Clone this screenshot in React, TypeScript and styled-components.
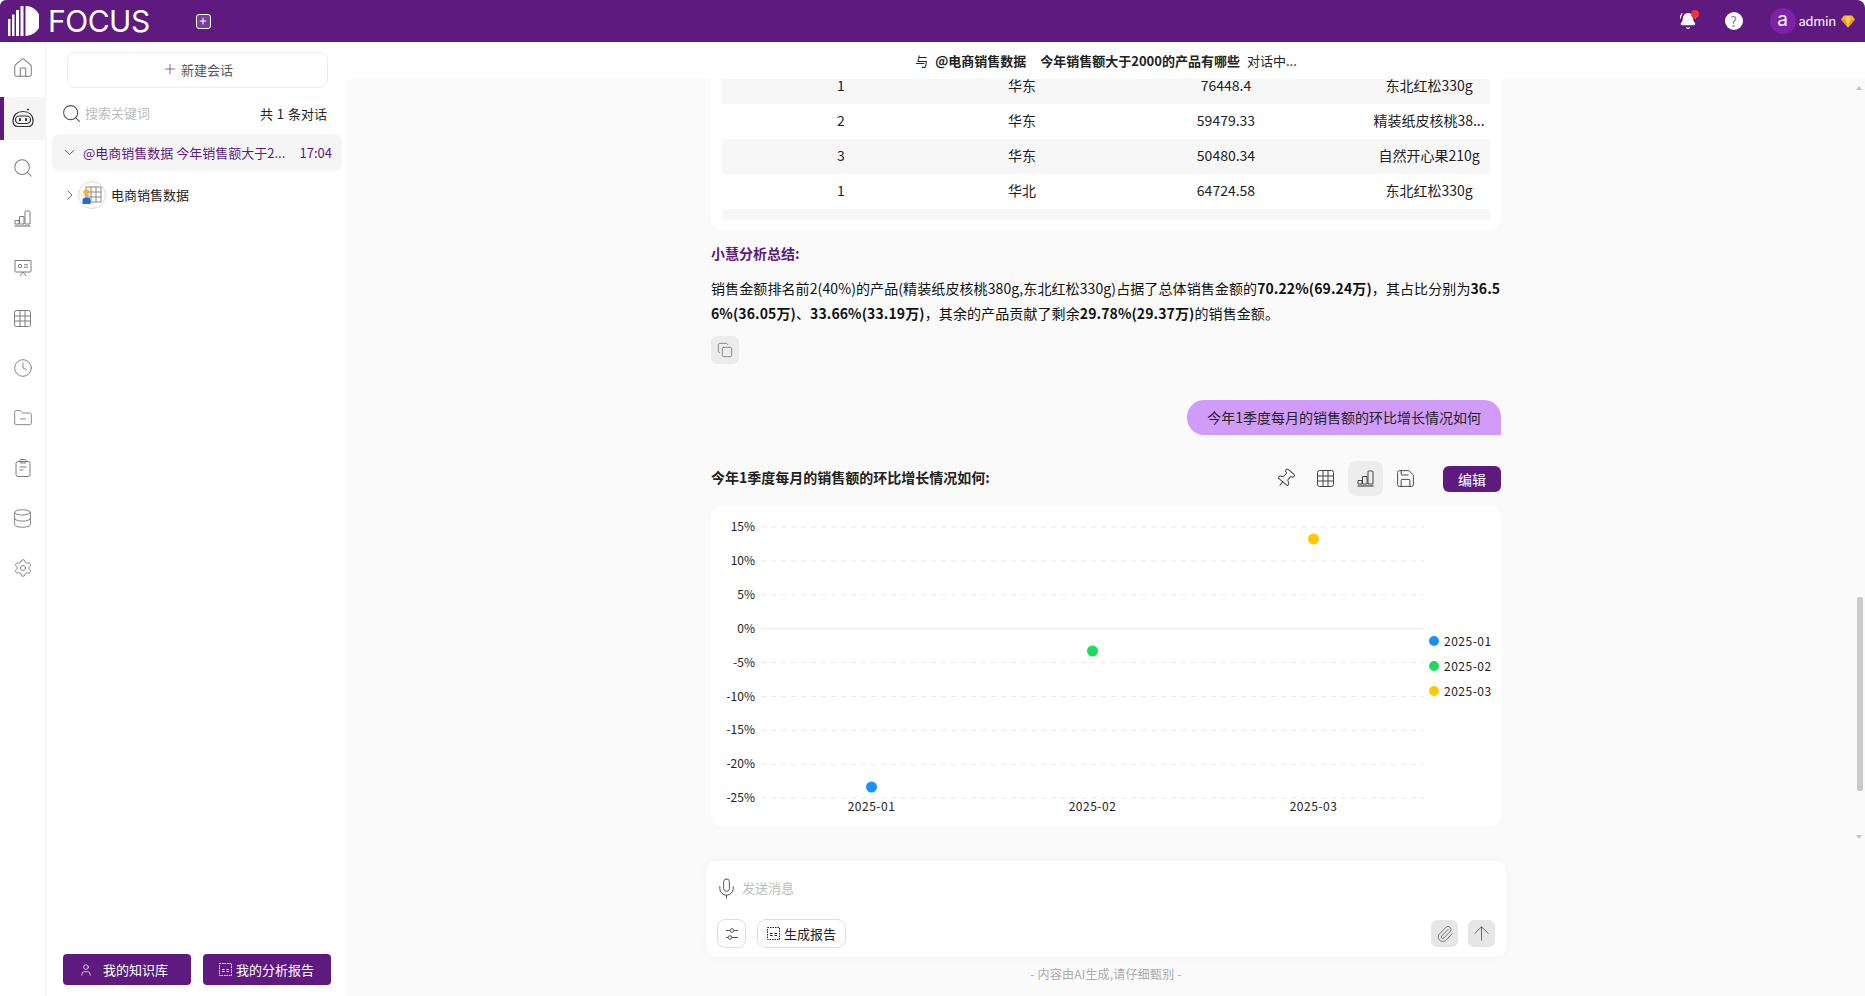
import React from "react";
import styled, { createGlobalStyle } from "styled-components";
import { ArrowUp, BellRing, ChevronDown, ChevronRight, Clock, Copy, Database, FolderMinus, Home, Mic, Paperclip, Pin, Plus, Save, Search, Settings, User } from "lucide-react";

const purple = "#5e1a7e";

const GlobalStyle = createGlobalStyle`
  html, body {
    margin: 0;
    height: 100%;
    background: #fff;
    font-family: "Noto Sans CJK SC", "Noto Sans", sans-serif;
    font-size: 14px;
    color: #222;
  }
  * { box-sizing: border-box; }
`;

const Shell = styled.div`
  display: flex;
  flex-direction: column;
  height: 996px;
  overflow: hidden;
`;

const TopBar = styled.header`
  flex: 0 0 42px;
  display: flex;
  align-items: center;
  padding: 0 10px 0 8px;
  background: ${purple};
  border-radius: 6px 8px 0 0;
  color: #fff;
`;

const LogoText = styled.span`
  margin-left: 9px;
  font-family: Inter, "Liberation Sans", sans-serif;
  font-size: 30px;
  line-height: 42px;
  letter-spacing: -0.5px;
`;

const AddTab = styled.button`
  width: 15px;
  height: 15px;
  margin-left: 46px;
  padding: 0;
  display: flex;
  align-items: center;
  justify-content: center;
  background: #7b3f98;
  color: #fff;
  border: 1px solid #fff;
  border-radius: 3px;
`;

const TopRight = styled.div`
  margin-left: auto;
  display: flex;
  align-items: center;
`;

const BellWrap = styled.span`
  position: relative;
  display: flex;
  margin-right: 28px;
`;

const RedDot = styled.i`
  position: absolute;
  top: -2px;
  right: -2px;
  width: 8px;
  height: 8px;
  border-radius: 50%;
  background: #f5322d;
`;

const HelpBadge = styled.span`
  width: 18px;
  height: 18px;
  margin-right: 27px;
  border-radius: 50%;
  background: #fff;
  color: #8a79a8;
  font-size: 14px;
  line-height: 18px;
  text-align: center;
`;

const Avatar = styled.span`
  width: 26px;
  height: 26px;
  border-radius: 50%;
  background: #7b22a8;
  font-family: Inter, sans-serif;
  font-size: 19px;
  line-height: 23px;
  text-align: center;
`;

const UserName = styled.span`
  margin: 0 5px 0 3px;
  font-size: 13px;
  line-height: 18px;
  letter-spacing: -0.3px;
`;

const Body = styled.div`
  flex: 1;
  min-height: 0;
  display: flex;
`;

const Rail = styled.nav`
  flex: 0 0 46px;
  display: flex;
  flex-direction: column;
  gap: 7px;
  padding-top: 4.5px;
  border-right: 1px solid #f4f4f4;
`;

const RailItem = styled.a<{ $active?: boolean }>`
  flex: 0 0 43px;
  display: flex;
  align-items: center;
  justify-content: center;
  color: #7d7d7d;
  background: ${(p) => (p.$active ? "#f5f5f5" : "transparent")};
  border-left: ${(p) => (p.$active ? `4px solid ${purple}` : "none")};
  padding-right: ${(p) => (p.$active ? "3px" : "0")};
`;

const Sidebar = styled.aside`
  flex: 0 0 301px;
  display: flex;
  flex-direction: column;
  background: #fff;
  font-size: 13px;
`;

const NewChat = styled.button`
  height: 36px;
  margin: 10px 19px 0 21px;
  padding: 0 0 2px;
  display: flex;
  align-items: center;
  justify-content: center;
  gap: 3px;
  background: #fff;
  border: 1px solid #eee;
  border-radius: 8px;
  font: inherit;
  color: #555;
`;

const SearchRow = styled.div`
  height: 26px;
  margin: 12px 20px 0 15px;
  display: flex;
  align-items: center;
  gap: 3px;
  color: #555;
`;

const SearchField = styled.input`
  flex: 1;
  min-width: 0;
  border: 0;
  outline: 0;
  padding: 0 0 2px;
  font: inherit;
  &::placeholder { color: #bdbdbd; }
`;

const Count = styled.span`
  color: #222;
  word-spacing: 1px;
`;

const ConvItem = styled.div`
  height: 37px;
  margin: 8px 5px 0 6px;
  padding: 0 10px 0 9px;
  display: flex;
  align-items: center;
  background: #f5f5f5;
  border-radius: 8px;
  color: ${purple};
`;

const ConvTitle = styled.span`
  margin-left: 5px;
  white-space: nowrap;
`;

const ConvTime = styled.span`
  margin-left: auto;
`;

const TreeRow = styled.div`
  height: 30px;
  margin: 9px 0 0 16px;
  display: flex;
  align-items: center;
  color: #222;
`;

const TreeLabel = styled.span`
  margin-left: 5px;
  padding-bottom: 2px;
`;

const SideFooter = styled.div`
  margin-top: auto;
  padding: 0 16px 11px 17px;
  display: flex;
  gap: 12px;
`;

const SideButton = styled.button<{ $gap: number }>`
  flex: 0 0 128px;
  height: 31px;
  padding: 0 0 0 16px;
  display: flex;
  align-items: center;
  gap: ${(p) => p.$gap}px;
  background: ${purple};
  color: #fff;
  border: 0;
  border-radius: 4px;
  font: inherit;
`;

const Main = styled.main`
  flex: 1;
  min-width: 0;
  position: relative;
  display: flex;
  flex-direction: column;
  background: #fafafa;
`;

const ConvHeader = styled.div`
  flex: 0 0 37px;
  position: relative;
  z-index: 1;
  background: #fff;
  font-size: 13px;
  line-height: 37px;
  text-align: center;
`;

const HeaderTopic = styled.b`
  margin: 0 7px;
  font-weight: 700;
`;

const Strong = styled.b`
  font-weight: 700;
`;

const Feed = styled.div`
  flex: 1;
  min-height: 0;
  overflow: hidden;
`;

const FeedInner = styled.div`
  width: 790px;
  margin: -10px auto 0;
`;

const TableCard = styled.div`
  padding: 0 11px 11px;
  background: #fff;
  border-radius: 0 0 12px 12px;
`;

const Row = styled.div`
  display: grid;
  grid-template-columns: 238px 124px 284px 122px;
  height: 35px;
  padding-bottom: 4px;
  align-items: center;
  text-align: center;
  line-height: 14px;
  &:nth-child(odd) { background: #f7f7f7; }
`;

const Cell = styled.span`
  white-space: nowrap;
`;

const TableTail = styled.div`
  height: 11px;
  background: #f7f7f7;
`;

const SummaryTitle = styled.div`
  margin-top: 12px;
  font-weight: 700;
  font-size: 14px;
  line-height: 20px;
  color: ${purple};
`;

const Summary = styled.p`
  margin: 12.5px 0 0;
  font-size: 14px;
  line-height: 25px;
  letter-spacing: 0.1px;
  word-break: break-all;
  color: #111;
`;

const CopyButton = styled.button`
  display: flex;
  align-items: center;
  justify-content: center;
  width: 28px;
  height: 28px;
  margin-top: 10.5px;
  padding: 0;
  background: #ececec;
  border: 0;
  border-radius: 6px;
  color: #666;
`;

const Bubble = styled.div`
  width: fit-content;
  margin: 36px 0 0 auto;
  padding: 0 20px;
  height: 35px;
  line-height: 35px;
  background: #d19cf9;
  border-radius: 17px 17px 0 17px;
  font-size: 14px;
  white-space: nowrap;
`;

const AnswerHead = styled.div`
  height: 35px;
  margin-top: 26px;
  display: flex;
  align-items: center;
`;

const AnswerTitle = styled.h3`
  margin: 0 auto 4px 0;
  font-size: 14px;
  font-weight: 700;
  line-height: 20px;
`;

const ToolButton = styled.button<{ $active?: boolean }>`
  width: 35px;
  height: 35px;
  margin-left: 5px;
  padding: 0;
  display: flex;
  align-items: center;
  justify-content: center;
  border: 0;
  border-radius: 8px;
  background: ${(p) => (p.$active ? "#ededed" : "transparent")};
  color: #444;
`;

const EditButton = styled.button`
  width: 58px;
  height: 26px;
  margin-left: 20px;
  padding: 0;
  background: ${purple};
  color: #fff;
  border: 0;
  border-radius: 6px;
  font: inherit;
  font-size: 14px;
`;

const ChartCard = styled.div`
  height: 320px;
  margin-top: 10px;
  background: #fff;
  border-radius: 10px;
`;

const ChartSvg = styled.svg`
  display: block;
  font-family: "Noto Sans CJK SC", sans-serif;
  font-size: 12px;
  fill: #222;
`;

const DateLabel = styled.text`
  letter-spacing: 0.5px;
`;

const Composer = styled.div`
  flex: 0 0 96px;
  width: 800px;
  margin: 0 auto;
  padding: 17px 11px 9px;
  display: flex;
  flex-direction: column;
  justify-content: space-between;
  background: #fff;
  border-radius: 10px;
  box-shadow: 0 0 8px rgba(0, 0, 0, 0.04);
`;

const ComposerInput = styled.div`
  height: 20px;
  margin-left: -2px;
  display: flex;
  align-items: center;
  gap: 4px;
  color: #555;
`;

const MessageField = styled.input`
  flex: 1;
  border: 0;
  outline: 0;
  padding: 0 0 2px;
  font: inherit;
  font-size: 13px;
  &::placeholder { color: #bcbcbc; }
`;

const ComposerBar = styled.div`
  height: 29px;
  display: flex;
  align-items: center;
  gap: 11px;
`;

const OutlineButton = styled.button`
  height: 29px;
  min-width: 29px;
  padding: 0 9px;
  display: flex;
  align-items: center;
  justify-content: center;
  gap: 4px;
  background: #fff;
  border: 1px solid #ddd;
  border-radius: 9px;
  font: inherit;
  font-size: 13px;
  color: #222;
`;

const SliderButton = styled(OutlineButton)`
  padding: 0;
  border-radius: 8px;
`;

const GreyButton = styled.button<{ $push?: boolean }>`
  width: 27px;
  height: 27px;
  margin-left: ${(p) => (p.$push ? "auto" : "-1px")};
  padding: 0;
  display: flex;
  align-items: center;
  justify-content: center;
  background: #e6e6e6;
  border: 0;
  border-radius: 6px;
  color: #666;
`;

const Disclaimer = styled.div`
  flex: 0 0 39px;
  padding-top: 7px;
  font-size: 12px;
  line-height: 20px;
  text-align: center;
  letter-spacing: 0.2px;
  color: #aaa;
`;

const ScrollArrow = styled.i<{ $down?: boolean }>`
  position: absolute;
  right: 3px;
  top: ${(p) => (p.$down ? "793px" : "44px")};
  width: 0;
  height: 0;
  border-left: 3.5px solid transparent;
  border-right: 3.5px solid transparent;
  border-bottom: ${(p) => (p.$down ? "0" : "4px solid #c4c4c4")};
  border-top: ${(p) => (p.$down ? "4px solid #c4c4c4" : "0")};
`;

const ScrollThumb = styled.i`
  position: absolute;
  right: 2px;
  top: 555px;
  width: 6px;
  height: 194px;
  border-radius: 2px;
  background: #cacaca;
`;

function LogoMark() {
  return (
    <svg width="31" height="32" viewBox="0 0 31 32" fill="#fff">
      <rect x="0" y="14" width="2.5" height="17" />
      <rect x="4" y="9.5" width="2.5" height="21.5" />
      <rect x="8" y="5" width="3" height="26" />
      <rect x="12.5" y="1" width="3" height="30" />
      <path d="M17.5 1 A 15 15 0 0 1 17.5 31 Z" />
    </svg>
  );
}

function BotIcon() {
  return (
    <svg width="24" height="20" viewBox="0 0 24 20" fill="none" stroke="#333" strokeWidth="1.2">
      <circle cx="17" cy="1.6" r="1" fill="#333" stroke="none" />
      <path d="M2 13 C2 7 6 3.5 12 3.5 S22 7 22 13 C22 17 20 18.5 17 18.5 H7 C4 18.5 2 17 2 13 Z" />
      <rect x="4.5" y="8" width="15" height="7.5" rx="3.7" />
      <rect x="8" y="10" width="2" height="3.2" rx="1" fill="#333" stroke="none" />
      <rect x="14" y="10" width="2" height="3.2" rx="1" fill="#333" stroke="none" />
    </svg>
  );
}

function BarsIcon({ size = 17 }: { size?: number }) {
  return (
    <svg width={size} height={size} viewBox="0 0 17 17" fill="none" stroke="currentColor" strokeWidth="1">
      <path d="M1 10.5 H5 V14 H1 Z M5.5 6.5 H10 V14 H5.5 Z M11 1.5 Q11 1 11.5 1 H15 Q16 1 16 2 V14 H11 Z" />
      <path d="M0.5 16 H16.5" strokeWidth="1.2" />
    </svg>
  );
}

function BoardIcon() {
  return (
    <svg width="18" height="18" viewBox="0 0 18 18" fill="none" stroke="currentColor" strokeWidth="1">
      <path d="M1 1.5 H17 V12 Q17 13 16 13 H2 Q1 13 1 12 Z" />
      <circle cx="6" cy="7" r="1.7" />
      <path d="M10 5.8 H14 M10 8.2 H14 M9 13 L6 17 M9 13 L12 17" />
    </svg>
  );
}

function GridIcon({ size = 17 }: { size?: number }) {
  return (
    <svg width={size} height={size} viewBox="0 0 17 17" fill="none" stroke="currentColor" strokeWidth="1">
      <rect x="0.5" y="0.5" width="16" height="16" rx="2" />
      <path d="M0.5 6 H16.5 M0.5 11 H16.5 M6 0.5 V16.5 M11 0.5 V16.5" />
    </svg>
  );
}

function ClipIcon() {
  return (
    <svg width="16" height="18" viewBox="0 0 16 18" fill="none" stroke="currentColor" strokeWidth="1">
      <rect x="1" y="2.5" width="14" height="15" rx="2" />
      <rect x="5" y="0.5" width="6" height="3.5" rx="1" />
      <path d="M4.5 8 H11.5 M4.5 11 H8.5" />
    </svg>
  );
}

function ReportIcon({ size = 13 }: { size?: number }) {
  return (
    <svg width={size} height={size} viewBox="0 0 13 13" fill="none" stroke="currentColor" strokeWidth="1">
      <rect x="0.5" y="0.5" width="12" height="12" strokeDasharray="1.5 1" />
      <path d="M3 6.5 H5.5 M7.5 6.5 H10 M3 8.5 H5.5 M7.5 8.5 H10" />
    </svg>
  );
}

function SliderIcon() {
  return (
    <svg width="14" height="14" viewBox="0 0 14 14" fill="none" stroke="#555" strokeWidth="1">
      <path d="M1 3.5 H5 M9 3.5 H13 M1 10.5 H3 M7 10.5 H13" />
      <circle cx="7" cy="3.5" r="1.8" />
      <circle cx="5" cy="10.5" r="1.8" />
    </svg>
  );
}

function GemIcon() {
  return (
    <svg width="14" height="13" viewBox="0 0 14 13">
      <path d="M3 0.5 H11 L14 4.5 L7 12.5 L0 4.5 Z" fill="#f5b92c" />
      <path d="M0 4.5 H14 L7 12.5 Z" fill="#ef9a1e" />
      <path d="M4.5 4.5 L7 0.5 L9.5 4.5 L7 12.5 Z" fill="#fbd257" />
    </svg>
  );
}

function TableAvatar() {
  return (
    <svg width="28" height="28" viewBox="0 0 28 28" fill="none">
      <circle cx="14" cy="14" r="13.5" fill="#fff" stroke="#dcdcdc" />
      <rect x="8" y="6" width="15" height="15" stroke="#888" strokeWidth="1" />
      <path d="M13 6 V21 M18 6 V21 M8 11 H23 M8 16 H23" stroke="#888" strokeWidth="1" />
      <path d="M5 12 A 3.5 3.5 0 0 1 12 12 Z" fill="#f2b630" />
      <circle cx="8.5" cy="14" r="2.3" fill="#e0ac7e" />
      <path d="M4.5 23 V19 Q4.5 16.5 8.5 16.5 Q12.5 16.5 12.5 19 V23 Z" fill="#1f6fd0" />
    </svg>
  );
}

const rows = [
  ["1", "华东", "76448.4", "东北红松330g"],
  ["2", "华东", "59479.33", "精装纸皮核桃38..."],
  ["3", "华东", "50480.34", "自然开心果210g"],
  ["1", "华北", "64724.58", "东北红松330g"],
];

const ticks = ["15%", "10%", "5%", "0%", "-5%", "-10%", "-15%", "-20%", "-25%"];

const points = [
  { label: "2025-01", x: 160.5, y: 281, color: "#1890ff" },
  { label: "2025-02", x: 381.5, y: 145, color: "#1fdb5a" },
  { label: "2025-03", x: 602.5, y: 33, color: "#ffc800" },
];

function ScatterChart() {
  return (
    <ChartSvg width="790" height="320" viewBox="0 0 790 320">
      {ticks.map((tick, i) => {
        const y = 21 + i * 33.9;
        return (
          <g key={tick}>
            <line x1="50" x2="713" y1={y} y2={y} stroke="#e8e8e8" strokeDasharray={tick === "0%" ? undefined : "5 5"} />
            <text x="44" y={y + 4} textAnchor="end">{tick}</text>
          </g>
        );
      })}
      {points.map((p, i) => (
        <g key={p.label}>
          <circle cx={p.x} cy={p.y} r="5.5" fill={p.color} />
          <DateLabel x={p.x} y="305" textAnchor="middle">{p.label}</DateLabel>
          <circle cx="723" cy={135 + i * 25} r="5" fill={p.color} />
          <DateLabel x="733" y={139.5 + i * 25}>{p.label}</DateLabel>
        </g>
      ))}
    </ChartSvg>
  );
}

export default function App() {
  return (
    <Shell>
      <GlobalStyle />
      <TopBar>
        <LogoMark />
        <LogoText>FOCUS</LogoText>
        <AddTab><Plus size={10} strokeWidth={2.5} /></AddTab>
        <TopRight>
          <BellWrap>
            <BellRing size={18} fill="#fff" color="#fff" strokeWidth={1.5} />
            <RedDot />
          </BellWrap>
          <HelpBadge>?</HelpBadge>
          <Avatar>a</Avatar>
          <UserName>admin</UserName>
          <GemIcon />
        </TopRight>
      </TopBar>
      <Body>
        <Rail>
          <RailItem><Home size={22} strokeWidth={1.1} /></RailItem>
          <RailItem $active><BotIcon /></RailItem>
          <RailItem><Search size={22} strokeWidth={1.1} /></RailItem>
          <RailItem><BarsIcon /></RailItem>
          <RailItem><BoardIcon /></RailItem>
          <RailItem><GridIcon /></RailItem>
          <RailItem><Clock size={20} strokeWidth={1.1} /></RailItem>
          <RailItem><FolderMinus size={20} strokeWidth={1.1} /></RailItem>
          <RailItem><ClipIcon /></RailItem>
          <RailItem><Database size={21} strokeWidth={1.1} /></RailItem>
          <RailItem><Settings size={20} strokeWidth={1.1} /></RailItem>
        </Rail>
        <Sidebar>
          <NewChat><Plus size={16} strokeWidth={1} color={purple} />新建会话</NewChat>
          <SearchRow>
            <Search size={21} strokeWidth={1.2} />
            <SearchField placeholder="搜索关键词" />
            <Count>共 1 条对话</Count>
          </SearchRow>
          <ConvItem>
            <ChevronDown size={17} strokeWidth={1.1} />
            <ConvTitle>@电商销售数据 今年销售额大于2...</ConvTitle>
            <ConvTime>17:04</ConvTime>
          </ConvItem>
          <TreeRow>
            <ChevronRight size={16} strokeWidth={1.2} color="#444" />
            <TableAvatar />
            <TreeLabel>电商销售数据</TreeLabel>
          </TreeRow>
          <SideFooter>
            <SideButton $gap={10}><User size={14} strokeWidth={1.2} />我的知识库</SideButton>
            <SideButton $gap={4}><ReportIcon />我的分析报告</SideButton>
          </SideFooter>
        </Sidebar>
        <Main>
          <ConvHeader>与<HeaderTopic>@电商销售数据</HeaderTopic><HeaderTopic>今年销售额大于2000的产品有哪些</HeaderTopic>对话中...</ConvHeader>
          <Feed>
            <FeedInner>
              <TableCard>
                {rows.map((row, i) => (
                  <Row key={i}>
                    {row.map((cell, j) => <Cell key={j}>{cell}</Cell>)}
                  </Row>
                ))}
                <TableTail />
              </TableCard>
              <SummaryTitle>小慧分析总结:</SummaryTitle>
              <Summary>
                销售金额排名前2(40%)的产品(精装纸皮核桃380g,东北红松330g)占据了总体销售金额的<Strong>70.22%(69.24万)</Strong>，其占比分别为<Strong>36.56%(36.05万)</Strong>、<Strong>33.66%(33.19万)</Strong>，其余的产品贡献了剩余<Strong>29.78%(29.37万)</Strong>的销售金额。
              </Summary>
              <CopyButton><Copy size={16} strokeWidth={1.1} /></CopyButton>
              <Bubble>今年1季度每月的销售额的环比增长情况如何</Bubble>
              <AnswerHead>
                <AnswerTitle>今年1季度每月的销售额的环比增长情况如何:</AnswerTitle>
                <ToolButton><Pin size={21} strokeWidth={1.1} style={{ transform: "rotate(40deg)" }} /></ToolButton>
                <ToolButton><GridIcon /></ToolButton>
                <ToolButton $active><BarsIcon /></ToolButton>
                <ToolButton><Save size={21} strokeWidth={1.1} /></ToolButton>
                <EditButton>编辑</EditButton>
              </AnswerHead>
              <ChartCard><ScatterChart /></ChartCard>
            </FeedInner>
          </Feed>
          <Composer>
            <ComposerInput>
              <Mic size={23} strokeWidth={1} />
              <MessageField placeholder="发送消息" />
            </ComposerInput>
            <ComposerBar>
              <SliderButton><SliderIcon /></SliderButton>
              <OutlineButton><ReportIcon />生成报告</OutlineButton>
              <GreyButton $push><Paperclip size={18} strokeWidth={1.1} /></GreyButton>
              <GreyButton><ArrowUp size={23} strokeWidth={1} /></GreyButton>
            </ComposerBar>
          </Composer>
          <Disclaimer>- 内容由AI生成,请仔细甄别 -</Disclaimer>
          <ScrollArrow />
          <ScrollThumb />
          <ScrollArrow $down />
        </Main>
      </Body>
    </Shell>
  );
}
